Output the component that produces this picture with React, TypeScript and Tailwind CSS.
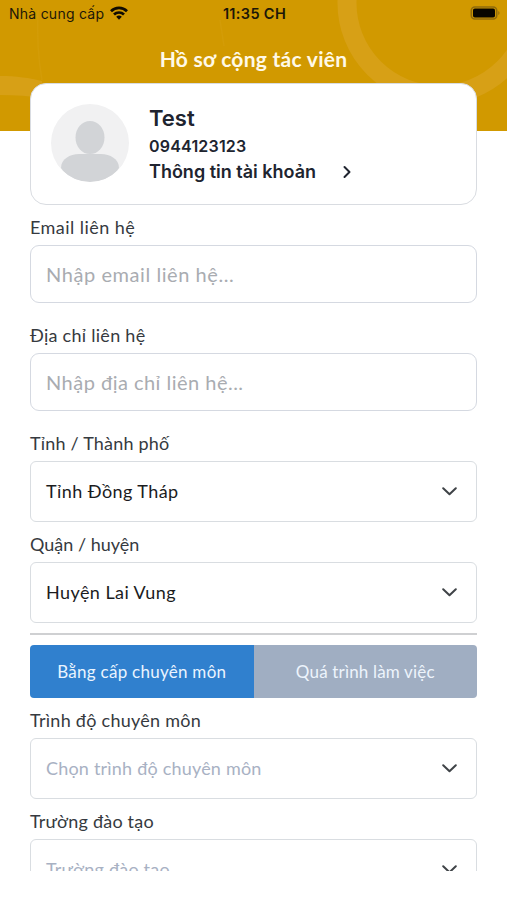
import type { ReactNode } from "react";

function Chevron({ className }: { className: string }) {
  return (
    <svg viewBox="0 0 15 9" className={className} fill="none" stroke="#3f4347" strokeWidth="2" strokeLinecap="round" strokeLinejoin="round">
      <path d="M1.2 1.2 7.5 7.3l6.3-6.1" />
    </svg>
  );
}

function Label({ children, className }: { children: ReactNode; className: string }) {
  return (
    <div className="flex h-9 items-center text-[18px] whitespace-nowrap text-[#363a40]">
      <span className={className}>{children}</span>
    </div>
  );
}

function Field({ label, labelClass, placeholder, textClass }: { label: string; labelClass: string; placeholder: string; textClass: string }) {
  return (
    <div className="mb-3.5">
      <Label className={labelClass}>{label}</Label>
      <div className="flex h-[58px] items-center rounded-[9px] border border-[#d5d9e1] px-[15px] pb-px text-[20px] whitespace-nowrap text-[#a9acb1]">
        <span className={textClass}>{placeholder}</span>
      </div>
    </div>
  );
}

function Select({ label, labelClass, value, textClass }: { label: string; labelClass: string; value: string; textClass: string }) {
  return (
    <div className="mb-1">
      <Label className={labelClass}>{label}</Label>
      <div className="flex h-[61px] items-center justify-between rounded-md border border-[#d9dde1] pr-[19px] pl-[15px] text-[18px] whitespace-nowrap">
        <span className={textClass}>{value}</span>
        <Chevron className="h-[9px] w-[15px]" />
      </div>
    </div>
  );
}

export default function App() {
  return (
    <div className="relative h-[900px] w-[507px] overflow-hidden bg-white font-[Lato,'Open_Sans',sans-serif]">
      <svg className="absolute top-0 left-0 h-[131px] w-[507px]" viewBox="0 0 507 131">
        <rect width="507" height="131" fill="#d19900" />
        <circle cx="439" cy="3" r="92" fill="none" stroke="#d7a016" strokeWidth="19" />
        <path d="M0 76c16 0 30 2 42 5v17C30 96 16 95 0 95Z" fill="#d7a016" />
        <path d="M38 10c-1 24 0 48 4 70M220 20l4 26" fill="none" stroke="#d39c07" strokeWidth="1.5" />
      </svg>
      <div className="relative flex h-[871px] flex-col overflow-hidden">
        <div className="grid h-[27px] shrink-0 grid-cols-3 items-center pr-[7px] pl-[9px] font-[Inter,sans-serif] text-[14px] text-[#1c1708]">
          <div className="flex items-center gap-[6px] whitespace-nowrap">
            <span className="tracking-[0.25px]">Nhà cung cấp</span>
            <svg viewBox="0 0 18 14" className="-mt-px h-3.5 w-[18px]" fill="none" stroke="#100c02" strokeWidth="2.7">
              <path d="M1 5.2a11.5 11.5 0 0 1 16 0M4 8.5a7.2 7.2 0 0 1 10 0" />
              <path d="m9 13.7-2.8-2.9a4 4 0 0 1 5.6 0Z" fill="#100c02" stroke="none" />
            </svg>
          </div>
          <span className="text-center text-[14.5px] font-semibold tracking-[0.35px] whitespace-nowrap">11:35 CH</span>
          <svg viewBox="0 0 30 14" className="-mt-px h-3.5 w-[30px] justify-self-end">
            <rect x="1.3" y="1" width="25.4" height="12" rx="3.5" fill="none" stroke="#8f6b0c" strokeWidth="1.6" />
            <rect x="3" y="2.5" width="22" height="9" rx="1.8" fill="#080600" />
            <path d="M28.3 5v4c1.6-.6 1.6-3.4 0-4Z" fill="#8f6b0c" />
          </svg>
        </div>
        <h1 className="flex h-14 shrink-0 items-center justify-center pt-[7px] text-[21px] font-bold whitespace-nowrap text-[#fff9e8]">
          <span className="tracking-[0.27px]">Hồ sơ cộng tác viên</span>
        </h1>
        <main className="mx-[30px] flex shrink-0 flex-col">
          <section className="mb-1 flex h-[122px] items-center rounded-2xl border border-[#d9dce1] bg-white pb-0.5 pl-5 font-[Inter,sans-serif] text-[#20242f]">
            <svg viewBox="0 0 78 78" className="size-[78px]">
              <clipPath id="avatar">
                <circle cx="39" cy="39" r="39" />
              </clipPath>
              <g clipPath="url(#avatar)">
                <rect width="78" height="78" fill="#f1f1f2" />
                <ellipse cx="39" cy="33.5" rx="14.5" ry="16.5" fill="#d2d4d7" />
                <path d="M10 64c0-9 9-14 18-14h22c9 0 18 5 18 14-6 9-16 14-29 14S16 73 10 64Z" fill="#d2d4d7" />
              </g>
            </svg>
            <div className="ml-5 flex flex-col whitespace-nowrap">
              <span className="text-[22px] leading-[30px] font-semibold">Test</span>
              <span className="text-[16px] leading-[27px] font-semibold tracking-[0.2px]">0944123123</span>
              <div className="flex items-center text-[18px] leading-6 font-semibold">
                <span>Thông tin tài khoản</span>
                <svg viewBox="0 0 8 14" className="ml-[27px] h-3.5 w-2" fill="none" stroke="#20242f" strokeWidth="2" strokeLinecap="round" strokeLinejoin="round">
                  <path d="m1.5 2 5 5-5 5" />
                </svg>
              </div>
            </div>
          </section>
          <Field label="Email liên hệ" labelClass="tracking-[0.45px]" placeholder="Nhập email liên hệ..." textClass="tracking-[0.57px]" />
          <Field label="Địa chỉ liên hệ" labelClass="tracking-[0.27px]" placeholder="Nhập địa chỉ liên hệ..." textClass="tracking-[0.48px]" />
          <Select label="Tỉnh / Thành phố" labelClass="tracking-[0.2px]" value="Tỉnh Đồng Tháp" textClass="tracking-[0.43px] text-[#1b1c1e]" />
          <Select label="Quận / huyện" labelClass="" value="Huyện Lai Vung" textClass="tracking-[0.43px] text-[#1b1c1e]" />
          <div className="mt-1.5 h-[2px] bg-[#cfd0d2]" />
          <div className="mt-2.5 mb-1 grid h-[53px] grid-cols-2 overflow-hidden rounded text-[17px] whitespace-nowrap">
            <div className="flex items-center justify-center bg-[#3080ce] text-[#eaf4ff]">
              <span className="tracking-[0.27px]">Bằng cấp chuyên môn</span>
            </div>
            <div className="flex items-center justify-center bg-[#a0aec2] text-[#edf4fc]">
              <span className="tracking-[0.17px]">Quá trình làm việc</span>
            </div>
          </div>
          <Select label="Trình độ chuyên môn" labelClass="tracking-[0.27px]" value="Chọn trình độ chuyên môn" textClass="tracking-[0.2px] text-[#a8b1c3]" />
          <Select label="Trường đào tạo" labelClass="tracking-[0.2px]" value="Trường đào tạo" textClass="tracking-[0.2px] text-[#a8b1c3]" />
        </main>
      </div>
    </div>
  );
}
